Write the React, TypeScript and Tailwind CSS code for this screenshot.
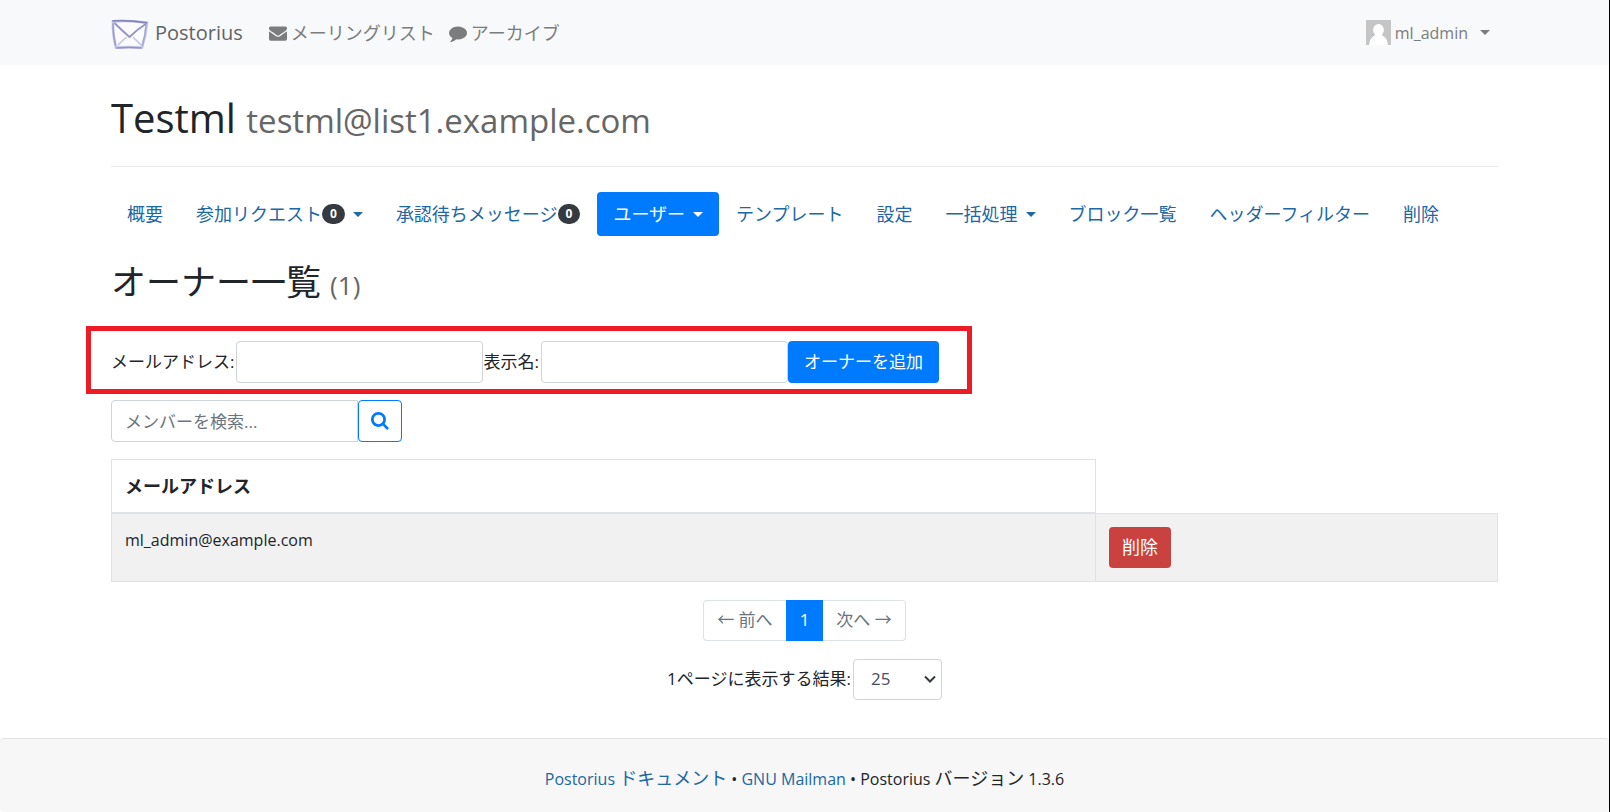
import { ReactNode } from "react";

const LINK = "text-[#2067a5]";

const navItems: { label: string, badge?: number, caret?: boolean, active?: boolean }[] = [
    { label: "概要" },
    { label: "参加リクエスト", badge: 0, caret: true },
    { label: "承認待ちメッセージ", badge: 0 },
    { label: "ユーザー", caret: true, active: true },
    { label: "テンプレート" },
    { label: "設定" },
    { label: "一括処理", caret: true },
    { label: "ブロック一覧" },
    { label: "ヘッダーフィルター" },
    { label: "削除" },
];

function Caret() {
    return <span className="ml-2 inline-block border-x-5 border-t-5 border-x-transparent border-t-current" />;
}

function Icon({ d, className }: { d: string, className?: string }) {
    return (
        <svg viewBox="0 0 1792 1792" fill="currentColor" className={className} aria-hidden="true">
            <path d={d} />
        </svg>
    );
}

const ENVELOPE = "M1792 710v794q0 66-47 113t-113 47h-1472q-66 0-113-47t-47-113v-794q44 49 101 87 362 246 497 345 57 42 92.5 65.5t94.5 48 110 24.5h2q51 0 110-24.5t94.5-48 92.5-65.5q170-123 498-345 57-39 100-87zm0-294q0 79-49 151t-122 123q-376 261-468 325-10 7-42.5 31t-54 38.5-52 32.5-57.5 27-50 9h-2q-23 0-50-9t-57.5-27-52-32.5-54-38.5-42.5-31q-91-64-262-182.5t-205-142.5q-62-42-117-115.5t-55-136.5q0-78 41.5-130t118.5-52h1472q65 0 112.5 47t47.5 113z";
const COMMENT = "M1792 896q0 174-120 321.5t-326 233-450 85.5q-70 0-145-8-198 175-460 242-49 14-114 22-17 2-30.5-9t-17.5-29v-1q-3-4-.5-12t2-10 4.5-9.5l6-9 7-8.5 8-9q7-8 31-34.5t34.5-38 31-39.5 32.5-51 27-59 26-76q-157-89-247.5-220t-90.5-281q0-130 71-248.5t191-204.5 286-136.5 348-50.5q244 0 450 85.5t326 233 120 321.5z";
const SEARCH = "M1152 704q0-185-131.5-316.5t-316.5-131.5-316.5 131.5-131.5 316.5 131.5 316.5 316.5 131.5 316.5-131.5 131.5-316.5zm512 832q0 52-38 90t-90 38q-54 0-90-38l-343-342q-179 124-399 124-143 0-273.5-55.5t-225-150-150-225-55.5-273.5 55.5-273.5 150-225 225-150 273.5-55.5 273.5 55.5 225 150 150 225 55.5 273.5q0 220-124 399l343 343q37 37 37 90z";

function Logo() {
    return (
        <svg viewBox="0 0 38 34" className="h-[34px] w-[38px]" fill="none" strokeLinecap="round" aria-hidden="true">
            <path d="M2 5.500 Q18 4 36 6.500 Q35 19 31 31.500 Q18 30.500 5 31.500 Q1.500 18 2 5.500Z" fill="#fbfbfe" stroke="#c3c4e4" strokeWidth="2.600" />
            <path d="M2 4.800 Q18 4 35.500 6.800" stroke="#8586bd" strokeWidth="1.700" />
            <path d="M2 8 Q2 19 4.500 29" stroke="#9c9dcc" strokeWidth="1.500" />
            <path d="M35 9 Q34.500 19 31.500 29" stroke="#a5a6d1" strokeWidth="1.400" />
            <path d="M6 32 Q19 31 30 32" stroke="#9192c6" strokeWidth="1.700" />
            <path d="M4 7.500 Q11 14.500 18.500 21 Q26 13.500 34 8.500" stroke="#9293c6" strokeWidth="1.800" />
            <path d="M7 29 L15 21.500 M22.500 21.500 L30 29" stroke="#c3c4e3" strokeWidth="1.600" />
        </svg>
    );
}

function Avatar() {
    return (
        <svg viewBox="0 0 25 25" className="size-[25px]" aria-hidden="true">
            <rect width="25" height="25" fill="#c5c5c5" />
            <ellipse cx="12.500" cy="10" rx="5.400" ry="6" fill="#fff" />
            <path d="M3 25 Q4 17 9.500 15 H15.500 Q21 17 22 25Z" fill="#fff" />
        </svg>
    );
}

function PageItem({ children, className = "" }: { children: ReactNode, className?: string }) {
    return (
        <a href="#" className={`flex h-[41px] items-center border px-[13px] ${className}`}>
            {children}
        </a>
    );
}

export default function App() {
    return (
        <div className="flex min-h-screen flex-col border-r border-black bg-white font-['Open_Sans','Noto_Sans_CJK_JP',sans-serif] text-[17px] leading-[26px] text-[#212529]">
            <header className="bg-[#f8f9fb]">
                <div className="mx-auto flex h-[65px] w-full max-w-[1387px] items-center text-[#7b7c7d]">
                    <a href="#" className="flex items-center gap-1.5 text-xl text-[#626364]">
                        <Logo />
                        Postorius
                    </a>
                    <nav className="ml-[26px] flex flex-1 items-center gap-3.5 text-lg">
                        <a href="#" className="flex items-center gap-1">
                            <Icon d={ENVELOPE} className="size-[18px]" />
                            メーリングリスト
                        </a>
                        <a href="#" className="flex items-center gap-1">
                            <Icon d={COMMENT} className="size-[18px]" />
                            アーカイブ
                        </a>
                    </nav>
                    <button type="button" className="mr-2 flex items-center text-base">
                        <Avatar />
                        <span className="mx-1">ml_admin</span>
                        <Caret />
                    </button>
                </div>
            </header>

            <main className="mx-auto w-full max-w-[1387px] flex-1">
                <h1 className="mt-[26px] text-[40px] leading-[53px]">
                    Testml <small className="text-[33px] text-[#666]">testml@list1.example.com</small>
                </h1>
                <hr className="mt-[19px] border-[#e9e9e9]" />

                <nav className="mt-[25px] flex flex-wrap gap-px text-lg">
                    {
                        navItems.map((item) => (
                            <a
                                key={item.label}
                                href="#"
                                className={`flex h-11 items-center rounded px-4 ${item.active ? "bg-[#007bff] text-white" : LINK}`}
                            >
                                {item.label}
                                {
                                    item.badge !== undefined && (
                                        <span className="rounded-full bg-[#343a40] px-2 text-xs leading-5 font-bold text-white">{item.badge}</span>
                                    )
                                }
                                {item.caret && <Caret />}
                            </a>
                        ))
                    }
                </nav>

                <h2 className="mt-[25px] text-[35px] leading-[42px]">
                    オーナー一覧 <small className="text-[26px] text-[#666]">(1)</small>
                </h2>

                <form className="mt-5 -ml-[25px] flex w-fit items-center border-5 border-[#ed1c24] pt-2.5 pr-7 pb-1.5 pl-5">
                    <label htmlFor="owner-email" className="pr-0.5">メールアドレス:</label>
                    <input id="owner-email" type="email" className="h-[42px] w-[247px] rounded border border-[#ced4da] px-3" />
                    <label htmlFor="owner-name" className="pr-0.5">表示名:</label>
                    <input id="owner-name" type="text" className="h-[42px] w-[247px] rounded border border-[#ced4da] px-3" />
                    <button type="button" className="h-[42px] rounded bg-[#007bff] px-4 text-white">オーナーを追加</button>
                </form>

                <form className="mt-1.5 flex">
                    <input
                        type="text"
                        aria-label="メンバーを検索"
                        placeholder="メンバーを検索..."
                        className="h-[42px] w-[247px] rounded-l border border-[#ced4da] px-[13px] placeholder:text-[#6c757d]"
                    />
                    <button type="button" aria-label="検索" className="flex h-[42px] w-11 items-center justify-center rounded border border-[#007bff] text-[#007bff]">
                        <Icon d={SEARCH} className="size-[19px]" />
                    </button>
                </form>

                <table className="mt-[17px] w-full border-collapse text-left">
                    <thead>
                        <tr>
                            <th className="w-[71%] border border-b-2 border-[#dee2e6] px-[13px] py-[13px] text-lg leading-[26px] font-bold">メールアドレス</th>
                        </tr>
                    </thead>
                    <tbody>
                        <tr className="bg-[#f1f1f1]">
                            <td className="border border-[#dee2e6] px-[13px] py-[13px] align-top text-base leading-[26px]">ml_admin@example.com</td>
                            <td className="border border-[#dee2e6] px-[13px] py-[13px]">
                                <button type="button" className="block h-[41px] rounded bg-[#c9423f] px-[13px] text-lg text-white">削除</button>
                            </td>
                        </tr>
                    </tbody>
                </table>

                <nav className="mt-[18px] flex justify-center">
                    <PageItem className="rounded-l border-r-0 border-[#dee2e6] text-[#6c757d]">← 前へ</PageItem>
                    <PageItem className="border-[#007bff] bg-[#007bff] text-white">1</PageItem>
                    <PageItem className="rounded-r border-l-0 border-[#dee2e6] text-[#6c757d]">次へ →</PageItem>
                </nav>

                <div className="mt-[18px] mb-[38px] flex items-center justify-center">
                    <label htmlFor="per-page" className="pr-0.5">1ページに表示する結果:</label>
                    <div className="relative">
                        <select id="per-page" defaultValue="25" className="block h-[41px] w-[89px] appearance-none rounded border border-[#ced4da] bg-white px-[17px] text-[#495057]">
                            <option>25</option>
                            <option>50</option>
                            <option>100</option>
                        </select>
                        <svg viewBox="0 0 12 8" className="pointer-events-none absolute top-4 right-1.5 h-2 w-3" fill="none" stroke="#343a40" strokeWidth="2" aria-hidden="true">
                            <path d="M1 1.500 L6 6.500 L11 1.500" />
                        </svg>
                    </div>
                </div>
            </main>

            <footer className="rounded border-t border-[#e3e3e3] bg-[#f7f7f7] pt-[26px] pb-5 text-center text-base leading-[26px]">
                <a href="#" className={LINK}>Postorius <span className="text-lg leading-[26px]">ドキュメント</span></a>
                {" • "}
                <a href="#" className={LINK}>GNU Mailman</a>
                {" • "}
                Postorius <span className="text-lg leading-[26px]">バージョン</span> 1.3.6
            </footer>
        </div>
    );
}
